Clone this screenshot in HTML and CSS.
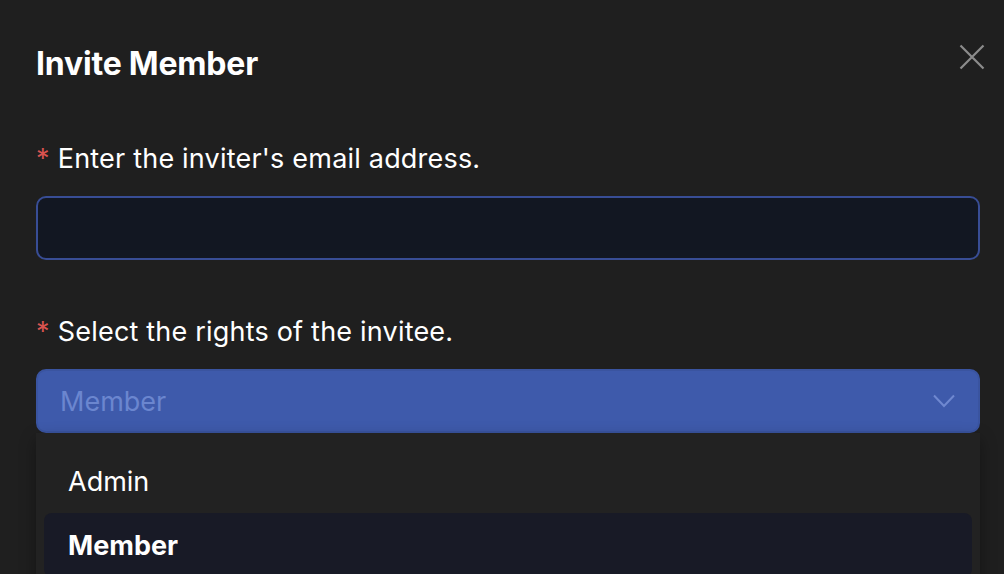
FILE: index.html
```html
<!DOCTYPE html>
<html lang="en">
<head>
  <meta charset="UTF-8" />
  <title>Invite Member</title>
  <link rel="stylesheet" href="styles.css">
</head>
<body>

<div class="modal">
  <div class="modal-header">
    <h2>Invite Member</h2>
    <button class="modal-close" aria-label="Close">
      <svg width="26" height="26" viewBox="0 0 26 26"><path d="M1.5 1.5L24.5 24.5M24.5 1.5L1.5 24.5" stroke="#8c8c8c" stroke-width="2.2" fill="none"/></svg>
    </button>
  </div>

  <div class="field">
    <label><span class="req">*</span>Enter the inviter's email address.</label>
    <input type="text" class="text-input" />
  </div>

  <div class="field">
    <label><span class="req">*</span>Select the rights of the invitee.</label>
    <div class="select-wrap">
      <div class="select">
        <span class="placeholder">Member</span>
        <svg width="22" height="14" viewBox="0 0 22 14"><path d="M1 1.5L11 12L21 1.5" stroke="#6f88d0" stroke-width="2" fill="none"/></svg>
      </div>
      <ul class="dropdown">
        <li>Admin</li>
        <li class="selected">Member</li>
      </ul>
    </div>
  </div>
</div>

</body>
</html>
```

FILE: styles.css
```css
body {
  margin: 0;
  background: #1f1f1f;
  font-family: Inter, "Noto Sans", sans-serif;
  color: #fff;
  height: 574px;
  overflow: hidden;
}
.modal {
  padding: 40px 24px 0 36px;
}
.modal-header {
  display: flex;
  justify-content: space-between;
  align-items: center;
  height: 46px;
}
.modal-header h2 {
  margin: 0;
  font-size: 32px;
  font-weight: 700;
  letter-spacing: -0.2px;
}
.modal-close {
  background: none;
  border: none;
  padding: 0;
  margin-right: -5px;
  margin-top: -12px;
  display: flex;
  cursor: pointer;
}
.field {
  margin-top: 57px;
}
.field + .field {
  margin-top: 56px;
}
.field label {
  display: block;
  font-size: 27px;
  line-height: 32px;
  letter-spacing: 0.2px;
  margin-bottom: 21px;
}
.req {
  color: #d9534f;
  margin-right: 8px;
}
.text-input {
  display: block;
  box-sizing: border-box;
  width: 100%;
  height: 64px;
  background: #121722;
  border: 2px solid #384d95;
  border-radius: 10px;
  outline: none;
  color: #fff;
  font-size: 27px;
}
.select-wrap {
  position: relative;
}
.select {
  box-sizing: border-box;
  height: 64px;
  background: #3e5aab;
  border: 2px solid #3a54a0;
  border-radius: 10px;
  display: flex;
  align-items: center;
  justify-content: space-between;
  padding: 0 23px 0 22px;
}
.placeholder {
  font-size: 27px;
  color: #6b86cf;
}
.dropdown {
  list-style: none;
  margin: 0;
  padding: 16px 8px 8px;
  background: #222222;
  box-shadow: 0 6px 16px rgba(0,0,0,0.35);
  border-radius: 0 0 8px 8px;
}
.dropdown li {
  height: 64px;
  display: flex;
  align-items: center;
  padding-left: 24px;
  font-size: 27px;
  border-radius: 8px;
}
.dropdown li.selected {
  background: #181a26;
  font-weight: 700;
}
```
